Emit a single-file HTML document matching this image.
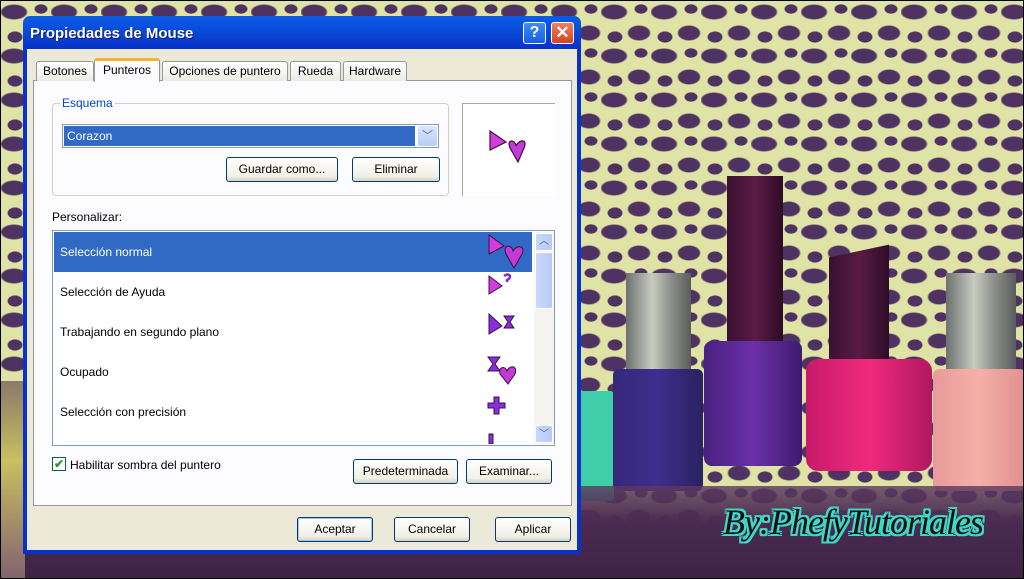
<!DOCTYPE html>
<html><head><meta charset="utf-8"><style>
*{margin:0;padding:0;box-sizing:border-box}
body{width:1024px;height:579px;overflow:hidden;position:relative;font-family:"Liberation Sans",sans-serif;font-size:12px;background:#000}
.bg{position:absolute;left:1px;top:1px;width:1022px;height:577px;overflow:hidden;
background-color:#dfe4a6;
background-image:
radial-gradient(ellipse 14px 8px at 13px 11px,#4e3262 85%,transparent 100%),
radial-gradient(ellipse 12px 8px at 38px 32px,#4e3262 85%,transparent 100%),
radial-gradient(ellipse 7px 5px at 40px 8px,#4e3262 85%,transparent 100%),
radial-gradient(ellipse 8px 6px at 14px 36px,#4e3262 85%,transparent 100%);
background-size:50px 44px;}
.abs{position:absolute}
.cap{position:absolute;background:linear-gradient(90deg,#6d7070,#c8cbc0 40%,#8a8d88 70%,#5a5d5c)}
.btn{position:absolute;border:1px solid #003c74;border-radius:3px;background:linear-gradient(#fff,#f1efe6 80%,#d6d0c0);text-align:center;line-height:23px;font-size:12px;color:#000}
.tab{position:absolute;top:61px;height:20px;border:1px solid #919b9c;border-bottom:none;background:linear-gradient(#fff,#ecebe5);border-radius:3px 3px 0 0;text-align:center;line-height:19px;font-size:12px}
.row{position:absolute;left:54px;width:478px;height:40px;line-height:40px;padding-left:6px;font-size:12px}
</style></head><body>
<div class="bg">
 <div class="abs" style="left:575px;top:390px;width:38px;height:110px;background:#3fcfa8;border-radius:4px"></div>
 <div class="cap" style="left:625px;top:272px;width:65px;height:100px"></div>
 <div class="abs" style="left:612px;top:368px;width:90px;height:122px;background:linear-gradient(90deg,#35287a,#3e2e8e 50%,#2a2260);border-radius:6px"></div>
 <div class="abs" style="left:726px;top:175px;width:56px;height:170px;background:linear-gradient(90deg,#3a1030,#5a1c45 50%,#2e0c26)"></div>
 <div class="abs" style="left:703px;top:340px;width:98px;height:125px;background:linear-gradient(90deg,#4a2080,#6a30a8 50%,#3e1a6e);border-radius:8px"></div>
 <div class="abs" style="left:828px;top:250px;width:60px;height:118px;background:linear-gradient(90deg,#3a1030,#5a1c45 50%,#2e0c26);transform:skewY(-12deg)"></div>
 <div class="abs" style="left:805px;top:358px;width:126px;height:112px;background:linear-gradient(90deg,#c81a6a,#f02a7c 50%,#b01860);border-radius:12px"></div>
 <div class="cap" style="left:945px;top:272px;width:70px;height:100px"></div>
 <div class="abs" style="left:932px;top:368px;width:92px;height:122px;background:linear-gradient(90deg,#e89a9a,#f5b0a8 50%,#e09090);border-radius:6px"></div>
 <div class="abs" style="left:0;top:485px;width:1022px;height:95px;background:linear-gradient(#5c3a60cc,#4a2a50 40%,#3e2244)"></div>
 <div class="abs" style="left:0;top:380px;width:24px;height:200px;background:linear-gradient(#8a7a6a,#c8c060 40%,#806070)"></div>
 <div class="abs" style="left:722px;top:500px;font-family:'Liberation Serif',serif;font-style:italic;font-size:36px;color:#111;letter-spacing:-1px;text-shadow:2px 0 #3ed8c8,-2px 0 #3ed8c8,0 2px #3ed8c8,0 -2px #3ed8c8,2px 2px #3ed8c8,-2px -2px #3ed8c8,2px -2px #3ed8c8,-2px 2px #3ed8c8">By:PhefyTutoriales</div>
</div>

<div class="abs" style="left:23px;top:16px;width:558px;height:538px;border-radius:7px 7px 0 0;background:linear-gradient(#0a5ce8,#0a44d4 20px,#0831c8 32px);"></div>
<div class="abs" style="left:27px;top:49px;width:550px;height:501px;background:#ece9d8"></div>
<div class="abs" style="left:30px;top:25px;color:#fff;font-weight:bold;font-size:15px;text-shadow:1px 1px #0a1a70">Propiedades de Mouse</div>
<div class="abs" style="left:523px;top:22px;width:23px;height:22px;border:1px solid #fff;border-radius:3px;background:linear-gradient(#3c8cf8,#1560e0);color:#fff;font-weight:bold;font-size:16px;text-align:center;line-height:20px">?</div>
<div class="abs" style="left:551px;top:22px;width:23px;height:22px;border:1px solid #fff;border-radius:3px;background:linear-gradient(#f08060,#d84020);color:#fff;font-weight:bold;font-size:17px;text-align:center;line-height:20px">✕</div>

<div class="abs" style="left:33px;top:80px;width:539px;height:426px;border:1px solid #919b9c;background:#fcfcfe"></div>
<div class="tab" style="left:36px;width:58px">Botones</div>
<div class="tab" style="left:162px;width:126px">Opciones de puntero</div>
<div class="tab" style="left:290px;width:51px">Rueda</div>
<div class="tab" style="left:343px;width:64px">Hardware</div>
<div class="tab" style="left:94px;top:58px;height:24px;width:66px;background:#fcfcfe;border-top:3px solid #f5b234;line-height:18px">Punteros</div>

<div class="abs" style="left:52px;top:103px;width:397px;height:93px;border:1px solid #d0d0bf;border-radius:4px"></div>
<div class="abs" style="left:60px;top:96px;padding:0 2px;background:#fcfcfe;color:#0046d5;font-size:12px">Esquema</div>
<div class="abs" style="left:62px;top:124px;width:377px;height:24px;border:1px solid #7f9db9;background:#fff"></div>
<div class="abs" style="left:64px;top:126px;width:351px;height:20px;background:#316ac5;color:#fff;line-height:20px;padding-left:3px;font-size:12px">Corazon</div>
<div class="abs" style="left:418px;top:126px;width:19px;height:20px;background:linear-gradient(#dbe6fd,#b9cdf8);border-radius:2px;color:#4d6185;text-align:center;font-size:11px;line-height:20px">﹀</div>
<div class="btn" style="left:226px;top:157px;width:112px;height:25px">Guardar como...</div>
<div class="btn" style="left:352px;top:157px;width:88px;height:25px">Eliminar</div>
<div class="abs" style="left:462px;top:103px;width:93px;height:93px;background:#fff;border-left:1px solid #aca899;border-top:1px solid #aca899"></div>
<svg class="abs" style="left:488px;top:130px" width="42" height="34" viewBox="0 0 42 34"><path d="M2 1 L2 20 L18 12 Z" fill="#d43ce0" stroke="#401040" stroke-width="1.2"/><path d="M22 18 C18 8 28 10 28 16 C32 8 40 10 36 18 L30 32 Z" fill="#c43ad8" stroke="#401040" stroke-width="1.2"/></svg>

<div class="abs" style="left:52px;top:210px;font-size:12px">Personalizar:</div>
<div class="abs" style="left:52px;top:230px;width:503px;height:216px;border:1px solid #7f9db9;background:#fff"></div>
<div class="row" style="top:232px;background:#316ac5;color:#fff">Selección normal</div>
<div class="row" style="top:272px">Selección de Ayuda</div>
<div class="row" style="top:312px">Trabajando en segundo plano</div>
<div class="row" style="top:352px">Ocupado</div>
<div class="row" style="top:392px">Selección con precisión</div>
<svg class="abs" style="left:486px;top:234px" width="46" height="210" viewBox="0 0 46 210">
<g stroke="#3a1040" stroke-width="1">
<path d="M3 1 L3 20 L18 12 Z" fill="#d43ce0"/><path d="M20 20 C16 10 26 10 27 17 C31 10 40 12 36 20 L28 34 Z" fill="#c43ad8"/>
<path d="M3 42 L3 60 L16 52 Z" fill="#d43ce0"/><path d="M18 42 q4 -3 6 0 q0 3 -3 4 v2" fill="none" stroke="#7a30d8" stroke-width="2.5"/>
<path d="M3 80 L3 100 L16 92 Z" fill="#8a2ee0"/><path d="M18 82 h10 l-4 6 l4 6 h-10 l4 -6 Z" fill="#8a2ee0"/>
<path d="M2 123 h12 l-5 7 l5 7 h-12 l5 -7 Z" fill="#8a2ee0"/><path d="M14 140 C12 132 20 132 21 137 C24 130 32 132 29 140 L22 150 Z" fill="#c43ad8"/>
<path d="M8 163 h5 v6 h6 v5 h-6 v6 h-5 v-6 h-6 v-5 h6 Z" fill="#8a2ee0"/>
<rect x="3" y="200" width="4" height="10" fill="#8a2ee0"/></g></svg>
<div class="abs" style="left:534px;top:232px;width:20px;height:212px;background:#f4f3ee"></div>
<div class="abs" style="left:535px;top:233px;width:18px;height:18px;background:linear-gradient(90deg,#c8d6fa,#b6cbf6);border:1px solid #fff;border-radius:2px;color:#4d6185;font-size:10px;text-align:center;line-height:16px">︿</div>
<div class="abs" style="left:535px;top:252px;width:18px;height:57px;background:linear-gradient(90deg,#cad8fb,#b8ccf7);border:1px solid #fff;border-radius:2px"></div>
<div class="abs" style="left:535px;top:425px;width:18px;height:18px;background:linear-gradient(90deg,#c8d6fa,#b6cbf6);border:1px solid #fff;border-radius:2px;color:#4d6185;font-size:10px;text-align:center;line-height:18px">﹀</div>

<div class="abs" style="left:52px;top:457px;width:14px;height:14px;border:1px solid #1c5180;background:#fff;color:#21a121;font-size:12px;line-height:12px;text-align:center;font-weight:bold">✔</div>
<div class="abs" style="left:70px;top:458px;font-size:12px">Habilitar sombra del puntero</div>
<div class="btn" style="left:353px;top:459px;width:105px;height:25px">Predeterminada</div>
<div class="btn" style="left:466px;top:459px;width:86px;height:25px">Examinar...</div>

<div class="btn" style="left:297px;top:517px;width:76px;height:25px;box-shadow:inset 0 0 0 1px #a8c4ec">Aceptar</div>
<div class="btn" style="left:394px;top:517px;width:76px;height:25px">Cancelar</div>
<div class="btn" style="left:495px;top:517px;width:76px;height:25px">Aplicar</div>
</body></html>
